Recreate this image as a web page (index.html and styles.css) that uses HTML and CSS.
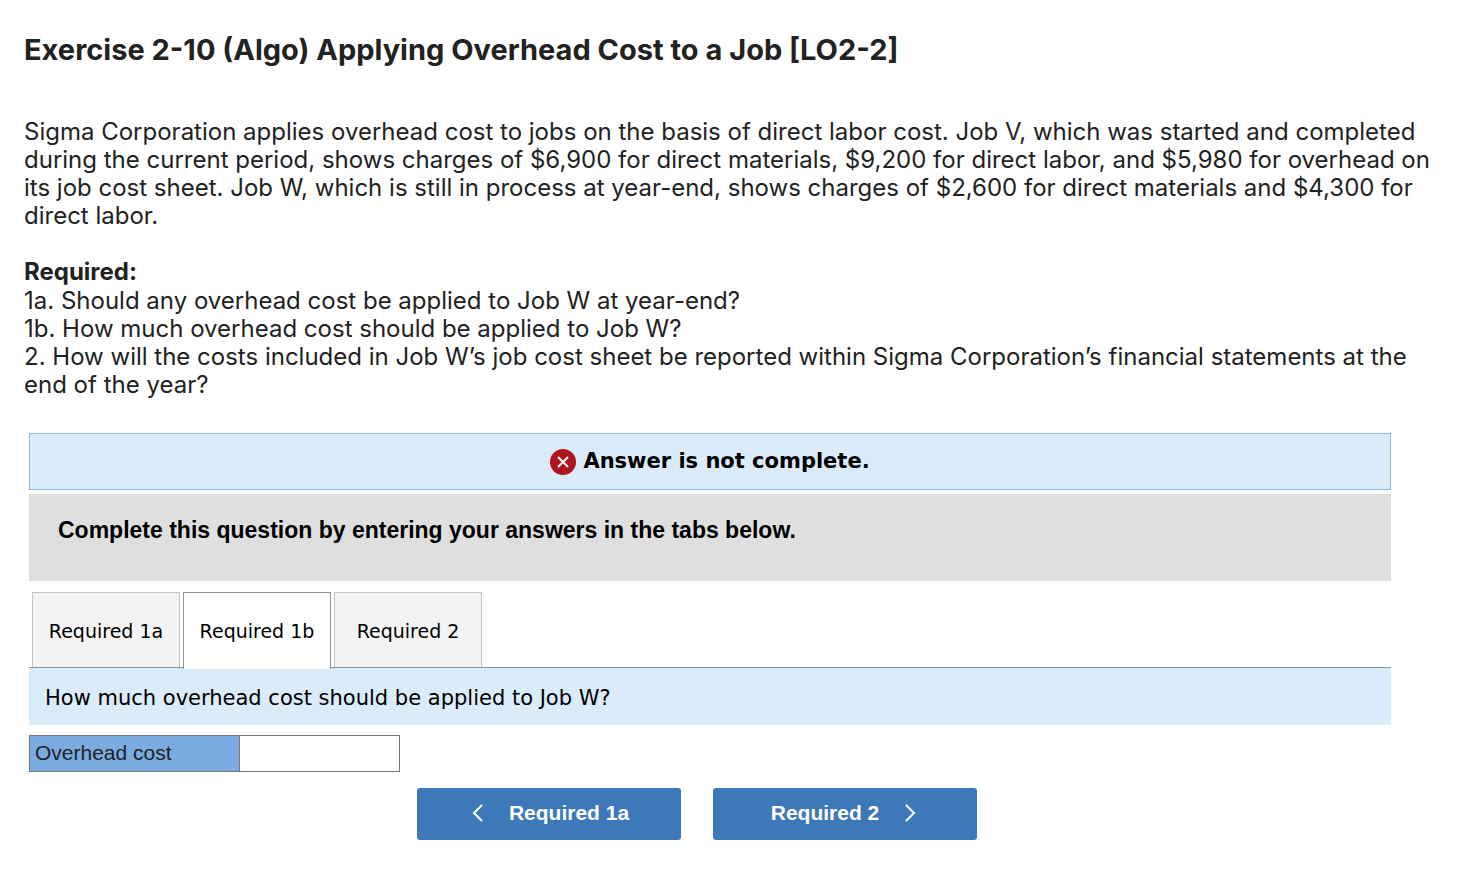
FILE: index.html
```html
<!DOCTYPE html>
<html lang="en">

<head>
  <meta charset="UTF-8">
  <meta name="viewport" content="width=device-width, initial-scale=1">
  <title>Exercise 2-10 (Algo) Applying Overhead Cost to a Job [LO2-2]</title>
  <link rel="stylesheet" href="styles.css">
</head>

<body>

  <main class="question">
    <h1>Exercise 2-10 (Algo) Applying Overhead Cost to a Job [LO2-2]</h1>

    <p class="intro">Sigma Corporation applies overhead cost to jobs on the basis of direct labor cost. Job V, which was started and completed during the current period, shows charges of $6,900 for direct materials, $9,200 for direct labor, and $5,980 for overhead on its job cost sheet. Job W, which is still in process at year-end, shows charges of $2,600 for direct materials and $4,300 for direct labor.</p>

    <section class="required">
      <h2>Required:</h2>
      <p>1a. Should any overhead cost be applied to Job W at year-end?</p>
      <p>1b. How much overhead cost should be applied to Job W?</p>
      <p>2. How will the costs included in Job W’s job cost sheet be reported within Sigma Corporation’s financial statements at the end of the year?</p>
    </section>

    <section class="worksheet">
      <div class="status">
        <svg class="status-icon" viewBox="0 0 26 26" aria-hidden="true">
          <circle cx="13" cy="13" r="13" fill="#b0141c"/>
          <path d="M8 8l10 10M18 8L8 18" stroke="#fff" stroke-width="2" fill="none"/>
        </svg>
        <span>Answer is not complete.</span>
      </div>

      <div class="instructions">Complete this question by entering your answers in the tabs below.</div>

      <div class="tabs" role="tablist">
        <button type="button" role="tab" class="tab" aria-selected="false">Required 1a</button>
        <button type="button" role="tab" class="tab active" aria-selected="true">Required 1b</button>
        <button type="button" role="tab" class="tab" aria-selected="false">Required 2</button>
      </div>

      <div class="prompt">How much overhead cost should be applied to Job W?</div>

      <table class="answers">
        <tr>
          <th scope="row"><label for="overhead">Overhead cost</label></th>
          <td><input type="text" id="overhead"></td>
        </tr>
      </table>

      <div class="nav">
        <button type="button" class="nav-btn">
          <svg class="chevron" viewBox="0 0 14 18" aria-hidden="true"><path d="M12.500 1.500L5 9l7.500 7.500"/></svg>
          Required 1a
        </button>
        <button type="button" class="nav-btn">
          Required 2
          <svg class="chevron" viewBox="0 0 14 18" aria-hidden="true"><path d="M1.500 1.500L9 9l-7.500 7.500"/></svg>
        </button>
      </div>
    </section>
  </main>

</body>

</html>
```

FILE: styles.css
```css
* {
  box-sizing: border-box;
}

body {
  margin: 0;
  background: #fff;
  color: #222;
  font-family: "Proxima Nova", Inter, sans-serif;
  font-size: 24px;
  line-height: 28px;
}

.question {
  padding: 32px 32px 30px 24px;
}

h1 {
  margin: 0 0 50px;
  font-size: 29px;
  line-height: 36px;
}

h2 {
  margin: 0 0 1px;
  font-size: 24px;
  line-height: 28px;
}

p {
  margin: 0;
}

.intro {
  margin-bottom: 28px;
}

/* Worksheet */
.worksheet {
  margin: 34px 53px 0 5px;
  color: #000;
}

.status {
  display: flex;
  align-items: center;
  justify-content: center;
  gap: 7px;
  margin-bottom: 4px;
  padding: 14px;
  border: 1px solid #8fb6e0;
  background: #daebfa;
  font-family: Verdana, "DejaVu Sans", sans-serif;
  font-size: 21px;
  font-weight: bold;
  line-height: 27px;
}

.status-icon {
  width: 26px;
  height: 26px;
}

.instructions {
  margin-bottom: 11px;
  padding: 22px 29px 37px;
  background: #dfdfdf;
  font-family: "Liberation Sans", Arial, sans-serif;
  font-size: 23px;
  font-weight: bold;
}

.tabs {
  display: flex;
  gap: 3px;
  padding-left: 3px;
  border-bottom: 1px solid #919191;
}

.tab {
  width: 148px;
  height: 75px;
  padding: 2px 0 0;
  border: 1px solid #c4c4c4;
  border-bottom: none;
  background: #f3f3f3;
  color: #000;
  font-family: Verdana, "DejaVu Sans", sans-serif;
  font-size: 19px;
  cursor: pointer;
}

.tab.active {
  position: relative;
  height: 77px;
  margin-bottom: -2px;
  padding-top: 0;
  border-color: #919191;
  background: #fff;
}

.prompt {
  margin-bottom: 10px;
  padding: 16px 16px 13px;
  background: #daebfa;
  font-family: Verdana, "DejaVu Sans", sans-serif;
  font-size: 21px;
}

.answers {
  border-collapse: collapse;
  font-family: "Liberation Sans", Arial, sans-serif;
  font-size: 21px;
}

.answers th,
.answers td {
  height: 36px;
  padding: 0;
  border: 1px solid #777;
}

.answers th {
  width: 210px;
  padding: 0 0 2px 5px;
  background: #7aace2;
  color: #222;
  font-weight: normal;
  text-align: left;
}

.answers td {
  width: 160px;
}

.answers input {
  display: block;
  width: 100%;
  height: 35px;
  padding: 0 5px;
  border: none;
  background: transparent;
  font: inherit;
}

.nav {
  display: flex;
  justify-content: center;
  gap: 32px;
  margin: 16px 26px 0 0;
}

.nav-btn {
  display: flex;
  align-items: center;
  justify-content: center;
  gap: 26px;
  width: 264px;
  height: 52px;
  padding: 0 0 2px;
  border: none;
  border-radius: 3px;
  background: #3d78b8;
  color: #fff;
  font-family: "Liberation Sans", Arial, sans-serif;
  font-size: 21px;
  font-weight: bold;
  cursor: pointer;
}

.chevron {
  width: 14px;
  height: 18px;
  fill: none;
  stroke: #fff;
  stroke-width: 2;
  stroke-linecap: round;
}
```
